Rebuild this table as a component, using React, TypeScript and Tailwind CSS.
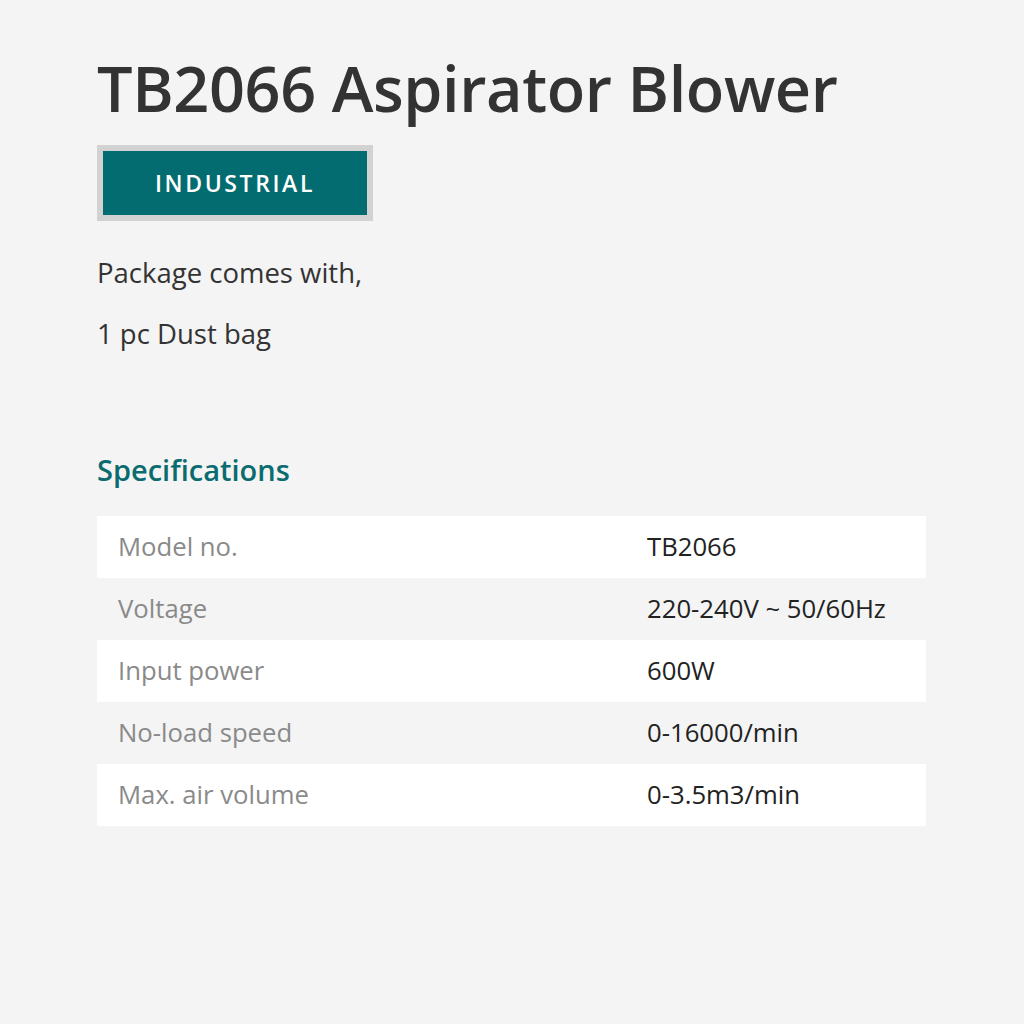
const specs = [
  { label: 'Model no.', value: 'TB2066' },
  { label: 'Voltage', value: '220-240V ~ 50/60Hz' },
  { label: 'Input power', value: '600W' },
  { label: 'No-load speed', value: '0-16000/min' },
  { label: 'Max. air volume', value: '0-3.5m3/min' },
];

export default function App() {
  return (
    <div className="min-h-[1024px] w-[1024px] bg-[#f4f4f4] font-['Open_Sans',sans-serif]">
      <div className="pl-[97px] pr-[98px] pt-[48px]">
        <h1 className="text-[63px] leading-[80px] font-semibold tracking-[-0.4px] text-[#333333] whitespace-nowrap">
          TB2066 Aspirator Blower
        </h1>

        {/* Category badge */}
        <div className="mt-[17px] inline-block bg-[#d2d2d2] p-[6px]">
          <div className="flex h-[64px] w-[264px] items-center justify-center bg-[#036c70] text-[23px] font-semibold tracking-[2.6px] text-white">
            INDUSTRIAL
          </div>
        </div>

        <p className="mt-[34px] text-[27.5px] leading-[36px] text-[#333333]">Package comes with,</p>
        <p className="mt-[25px] text-[27.5px] leading-[36px] text-[#333333]">1 pc Dust bag</p>

        <h2 className="mt-[99px] text-[29px] leading-[38px] font-semibold text-[#0b6c70]">
          Specifications
        </h2>

        {/* Spec table */}
        <div className="mt-[27px] w-[829px]">
          {specs.map((s, i) => (
            <div
              key={s.label}
              className={`flex h-[62px] items-center text-[25.7px] ${i % 2 === 0 ? 'bg-white' : 'bg-transparent'}`}
            >
              <span className="w-[550px] pl-[21px] text-[#8a8a8a]">{s.label}</span>
              <span className="text-[#222222]">{s.value}</span>
            </div>
          ))}
        </div>
      </div>
    </div>
  );
}
